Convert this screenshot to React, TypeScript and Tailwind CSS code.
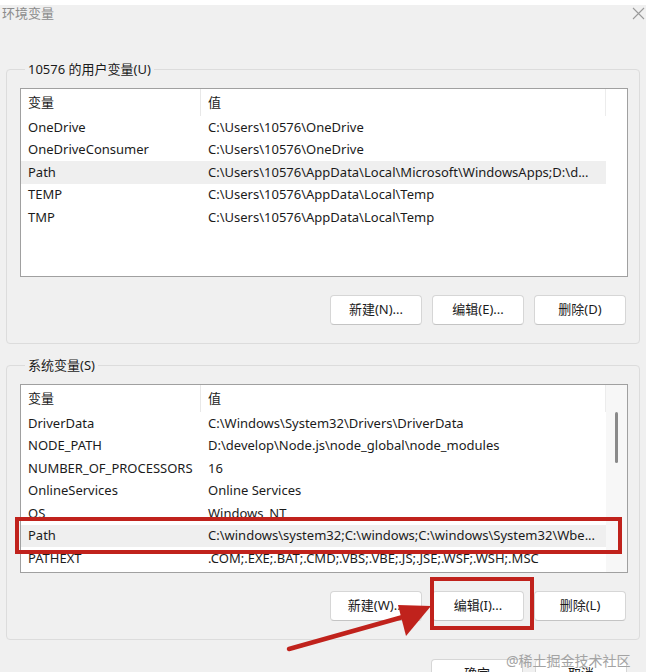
const font = { fontFamily: '"Noto Sans", "Noto Sans CJK SC", sans-serif' }

type Row = [string, string]

const userRows: Row[] = [
  ["OneDrive", "C:\\Users\\10576\\OneDrive"],
  ["OneDriveConsumer", "C:\\Users\\10576\\OneDrive"],
  ["Path", "C:\\Users\\10576\\AppData\\Local\\Microsoft\\WindowsApps;D:\\d..."],
  ["TEMP", "C:\\Users\\10576\\AppData\\Local\\Temp"],
  ["TMP", "C:\\Users\\10576\\AppData\\Local\\Temp"],
]

const systemRows: Row[] = [
  ["DriverData", "C:\\Windows\\System32\\Drivers\\DriverData"],
  ["NODE_PATH", "D:\\develop\\Node.js\\node_global\\node_modules"],
  ["NUMBER_OF_PROCESSORS", "16"],
  ["OnlineServices", "Online Services"],
  ["OS", "Windows_NT"],
  ["Path", "C:\\windows\\system32;C:\\windows;C:\\windows\\System32\\Wbe..."],
  ["PATHEXT", ".COM;.EXE;.BAT;.CMD;.VBS;.VBE;.JS;.JSE;.WSF;.WSH;.MSC"],
]

function VarList({ rows, selected, scrollbar }: { rows: Row[]; selected: number; scrollbar?: boolean }) {
  return (
    <div className="flex h-[189px] border border-[#a0a0a0] bg-white">
      <div className="flex min-w-0 flex-1 flex-col overflow-hidden">
        <div className="flex h-[27px] shrink-0 items-center text-[13px] text-[#1b1b1b]">
          <div className="flex h-full w-[180px] shrink-0 items-center border-r border-[#e8e8e8] pl-[7px]">变量</div>
          <div className="flex h-full flex-1 items-center border-r border-[#ececec] pl-[7px]">值</div>
        </div>
        {rows.map(([name, value], i) => (
          <div
            key={name}
            className={
              "flex h-[22.5px] shrink-0 items-center whitespace-nowrap text-[13px] text-[#1b1b1b] " +
              (i === selected ? "bg-[#efefef]" : "")
            }
          >
            <div className="w-[180px] shrink-0 overflow-hidden pl-[7px]">{name}</div>
            <div className="flex-1 overflow-hidden pl-[7px]">{value}</div>
          </div>
        ))}
      </div>
      <div className={"relative w-[21px] shrink-0 " + (scrollbar ? "bg-[#f7f7f7]" : "bg-white")}>
        {scrollbar && <div className="mx-auto mt-[27px] h-[51px] w-[3px] rounded-full bg-[#8a8a8a]" />}
      </div>
    </div>
  )
}

function Btn({ label }: { label: string }) {
  return (
    <button className="flex h-[30px] w-[92px] items-center justify-center rounded-[4px] border border-[#d6d6d6] border-b-[#c4c4c4] bg-white text-[13px] text-[#1b1b1b]">
      {label}
    </button>
  )
}

function Group({ title, children }: { title: string; children: React.ReactNode }) {
  return (
    <fieldset className="mx-[6px] rounded-[4px] border border-[#dcdcdc] pb-[18px] pl-[13px] pr-[11px]">
      <legend className="ml-[5px] px-[3px] text-[13px] leading-[18px] text-[#1b1b1b]">{title}</legend>
      {children}
    </fieldset>
  )
}

export default function App() {
  return (
    <div className="relative h-[672px] w-[646px] overflow-hidden bg-[#f0f0f0]" style={font}>
      <div className="h-[5px] bg-white" />
      <div className="flex h-[17px] items-center justify-between pl-[2px] pr-[1px] text-[13px] text-[#8c8c8c]">
        <span>环境变量</span>
        <svg width="13" height="13" viewBox="0 0 13 13" stroke="#9a9a9a" strokeWidth="1.1">
          <path d="M1 1L12 12M12 1L1 12" />
        </svg>
      </div>

      <div className="mt-[38px]">
        <Group title="10576 的用户变量(U)">
          <div className="mt-[10px]">
            <VarList rows={userRows} selected={2} />
          </div>
          <div className="mt-[18px] flex justify-end gap-[10px] pr-[2px]">
            <Btn label="新建(N)..." />
            <Btn label="编辑(E)..." />
            <Btn label="删除(D)" />
          </div>
        </Group>
      </div>

      <div className="mt-[12px]">
        <Group title="系统变量(S)">
          <div className="mt-[10px]">
            <VarList rows={systemRows} selected={5} scrollbar />
          </div>
          <div className="mt-[18px] flex justify-end gap-[10px] pr-[2px]">
            <Btn label="新建(W)..." />
            <Btn label="编辑(I)..." />
            <Btn label="删除(L)" />
          </div>
        </Group>
      </div>

      <div className="mt-[19px] flex justify-end gap-[12px] pr-[19px]">
        <Btn label="确定" />
        <Btn label="取消" />
      </div>

      {/* red annotations */}
      <div className="absolute left-[15px] top-[517px] h-[37px] w-[607px] border-[4px] border-[#c0221c]" />
      <div className="absolute left-[430px] top-[577px] h-[53px] w-[104px] border-[4px] border-[#c0221c]" />
      <svg className="absolute left-0 top-0" width="646" height="672">
        <line x1="289" y1="649" x2="410" y2="615" stroke="#c0221c" strokeWidth="4.5" strokeLinecap="round" />
        <polygon points="431,606 398,605 406,636" fill="#c0221c" />
      </svg>

      <div className="absolute left-[506px] top-[650px] text-[14px] text-[#a3a3a3]">@稀土掘金技术社区</div>
    </div>
  )
}
